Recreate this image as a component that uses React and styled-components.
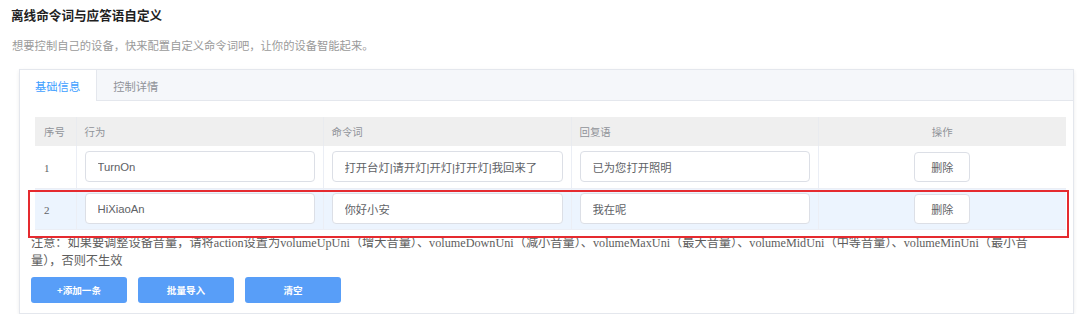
import React from 'react';
import styled, { createGlobalStyle } from 'styled-components';

const GlobalStyle = createGlobalStyle`
  body {
    margin: 0;
    background: #fff;
    font-family: "Liberation Sans", "Noto Sans CJK SC", sans-serif;
  }
`;

const rows = [
  { id: 1, action: 'TurnOn', words: '打开台灯|请开灯|开灯|打开灯|我回来了', reply: '已为您打开照明' },
  { id: 2, action: 'HiXiaoAn', words: '你好小安', reply: '我在呢', active: true },
];

const App = () => {
  return (
    <>
      <GlobalStyle />
      <Page>
        <Title>离线命令词与应答语自定义</Title>
        <Subtitle>想要控制自己的设备，快来配置自定义命令词吧，让你的设备智能起来。</Subtitle>
        <Card>
          <TabBar>
            <Tab active>基础信息</Tab>
            <Tab>控制详情</Tab>
          </TabBar>
          <Content>
            <TableWrap>
              <Table>
                <colgroup>
                  <col style={{ width: 41 }} />
                  <col style={{ width: 247 }} />
                  <col style={{ width: 248 }} />
                  <col style={{ width: 247 }} />
                  <col style={{ width: 248 }} />
                </colgroup>
                <thead>
                  <tr>
                    <Th>序号</Th>
                    <Th>行为</Th>
                    <Th>命令词</Th>
                    <Th>回复语</Th>
                    <Th center>操作</Th>
                  </tr>
                </thead>
                <tbody>
                  {rows.map(r => (
                    <Row key={r.id} active={r.active} first={r.id === 1}>
                      <Td>
                        <Index>{r.id}</Index>
                      </Td>
                      <Td>
                        <Input defaultValue={r.action} />
                      </Td>
                      <Td>
                        <Input defaultValue={r.words} />
                      </Td>
                      <Td>
                        <Input defaultValue={r.reply} />
                      </Td>
                      <Td center>
                        <DeleteButton>删除</DeleteButton>
                      </Td>
                    </Row>
                  ))}
                </tbody>
              </Table>
              <Highlight />
            </TableWrap>
            <Note>
              注意：如果要调整设备音量，请将action设置为volumeUpUni（增大音量）、volumeDownUni（减小音量）、volumeMaxUni（最大音量）、volumeMidUni（中等音量）、volumeMinUni（最小音量），否则不生效
            </Note>
            <Actions>
              <PrimaryButton>+添加一条</PrimaryButton>
              <PrimaryButton>批量导入</PrimaryButton>
              <PrimaryButton>清空</PrimaryButton>
            </Actions>
          </Content>
        </Card>
      </Page>
    </>
  );
};

export default App;

const Page = styled.div`
  padding: 6px 0 0 11px;
  width: 1080px;
  box-sizing: border-box;
`;

const Title = styled.h1`
  margin: 0;
  font-size: 12.6px;
  line-height: 18px;
  font-weight: 700;
  color: #1f1f1f;
  font-family: "Noto Sans CJK SC", sans-serif;
`;

const Subtitle = styled.p`
  margin: 12px 0 0 1px;
  font-size: 11.3px;
  line-height: 18px;
  color: #9a9a9a;
  font-family: "Noto Sans CJK SC", sans-serif;
`;

const Card = styled.div`
  margin: 15px 0 0 8px;
  width: 1055px;
  box-sizing: border-box;
  border: 1px solid #e4e7ed;
  background: #fff;
  box-shadow: 0 2px 4px rgba(0, 0, 0, 0.06), 0 0 6px rgba(0, 0, 0, 0.02);
`;

const TabBar = styled.div`
  display: flex;
  height: 30px;
  background: #f5f7fa;
  border-bottom: 1px solid #e4e7ed;
`;

const Tab = styled.div`
  display: flex;
  align-items: center;
  padding: 0 16px 0 ${p => (p.active ? '15px' : '16px')};
  height: 31px;
  margin-bottom: -1px;
  box-sizing: border-box;
  font-size: 11.3px;
  font-family: "Noto Sans CJK SC", sans-serif;
  color: ${p => (p.active ? '#409eff' : '#909399')};
  background: ${p => (p.active ? '#fff' : 'transparent')};
  border-right: 1px solid ${p => (p.active ? '#e4e7ed' : 'transparent')};
`;

const Content = styled.div`
  padding: 16px 7px 10px 11px;
`;

const TableWrap = styled.div`
  position: relative;
  margin-left: 4px;
`;

const Table = styled.table`
  width: 1031px;
  table-layout: fixed;
  border-collapse: collapse;
`;

const Th = styled.th`
  height: 29px;
  padding: 0 8px;
  background: #efefef;
  border-right: 1px solid #e9ebef;
  text-align: ${p => (p.center ? 'center' : 'left')};
  font-size: 10.4px;
  font-weight: 400;
  color: #909399;
  font-family: "Noto Sans CJK SC", sans-serif;
  &:first-child {
    padding-left: 9px;
  }
  &:last-child {
    border-right: none;
  }
`;

const Row = styled.tr`
  height: ${p => (p.first ? '42px' : '41px')};
  background: ${p => (p.active ? '#ecf4fe' : '#fff')};
  border-bottom: 1px solid #ebeef5;
`;

const Td = styled.td`
  padding: 0 8px;
  border-right: 1px solid #ebeef5;
  text-align: ${p => (p.center ? 'center' : 'left')};
  &:last-child {
    border-right: none;
  }
`;

const Index = styled.span`
  padding-left: 1px;
  font-family: "Liberation Serif", serif;
  font-size: 11px;
  color: #606266;
`;

const Input = styled.input`
  display: block;
  width: 100%;
  height: 31px;
  box-sizing: border-box;
  padding: 0 12px;
  border: 1px solid #dcdfe6;
  border-radius: 4px;
  background: #fff;
  font-size: 11.3px;
  font-family: "Liberation Sans", "Noto Sans CJK SC", sans-serif;
  color: #606266;
  outline: none;
`;

const DeleteButton = styled.button`
  width: 56px;
  height: 30px;
  border: 1px solid #dcdfe6;
  border-radius: 4px;
  background: #fff;
  font-size: 11px;
  font-family: "Noto Sans CJK SC", sans-serif;
  color: #606266;
  padding: 0;
`;

const Highlight = styled.div`
  position: absolute;
  left: -7px;
  top: 73px;
  width: 1041px;
  height: 48px;
  box-sizing: border-box;
  border: 2px solid #e52a2f;
  pointer-events: none;
`;

const Note = styled.p`
  margin: 4px 0 0;
  width: 1014px;
  font-size: 12.2px;
  line-height: 18px;
  color: #5e5e5e;
  font-family: "Liberation Serif", "Noto Sans CJK SC", serif;
`;

const Actions = styled.div`
  display: flex;
  gap: 11px;
  margin-top: 7px;
`;

const PrimaryButton = styled.button`
  width: 96px;
  height: 26px;
  padding: 0;
  border: none;
  border-radius: 3px;
  background: #589ef8;
  color: #fff;
  font-size: 9.6px;
  font-weight: 700;
  font-family: "Noto Sans CJK SC", sans-serif;
`;
